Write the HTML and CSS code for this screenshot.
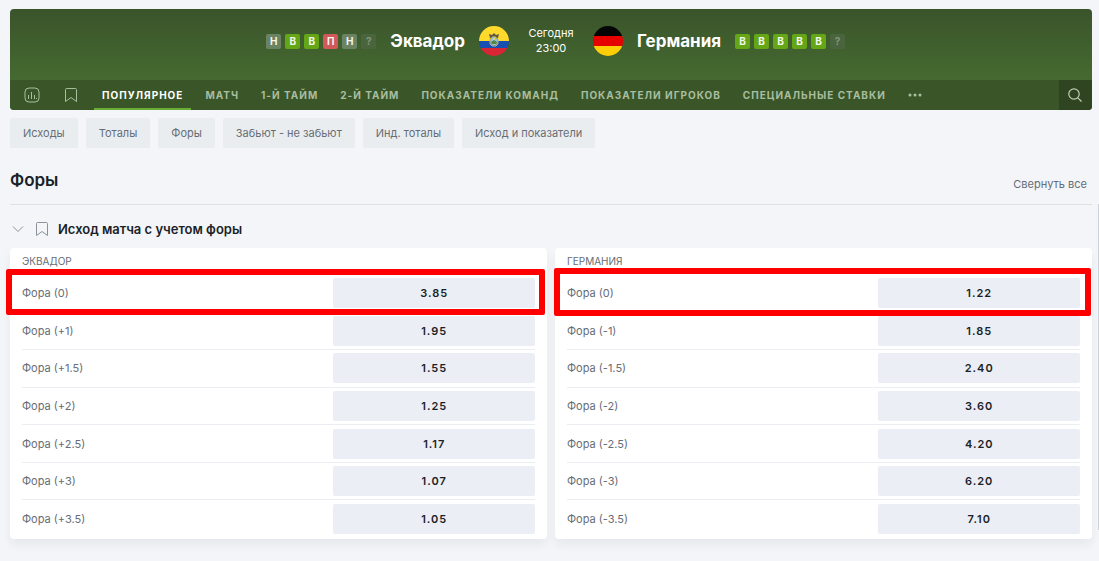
FILE: index.html
```html
<!DOCTYPE html>
<html lang="ru">
<head>
<meta charset="utf-8">
<meta name="viewport" content="width=device-width, initial-scale=1">
<title>Эквадор — Германия</title>
<link rel="stylesheet" href="styles.css">
</head>
<body>
<header class="match">
  <div class="scoreboard">
    <div class="team team-home">
      <div class="form">
        <span class="chip draw">Н</span><span class="chip win">В</span><span class="chip win">В</span><span class="chip loss">П</span><span class="chip draw">Н</span><span class="chip unknown">?</span>
      </div>
      <h1 class="team-name">Эквадор</h1>
      <svg class="flag" viewBox="0 0 30 30" aria-hidden="true">
        <clipPath id="round"><circle cx="15" cy="15" r="15"/></clipPath>
        <g clip-path="url(#round)">
          <path fill="#ffda2c" d="M0 0h30v15H0z"/>
          <path fill="#1750b0" d="M0 15h30v7H0z"/>
          <path fill="#d92637" d="M0 22h30v8H0z"/>
        </g>
        <path fill="#5d5744" d="M10 8l3 1 2-2 2 2 3-1-1 4-2 1h-4l-2-1z"/>
        <ellipse cx="15" cy="15" rx="4" ry="5" fill="#b99a3c"/>
        <ellipse cx="15" cy="15" rx="3" ry="4" fill="#8fc6e8"/>
        <path fill="#4d8a4a" d="M12 16l3-2 3 2-1 2h-4z"/>
        <circle cx="15" cy="13" r="1" fill="#ffda2c"/>
        <path fill="none" stroke="#a8b4bd" d="M11 13v5l2 2M19 13v5l-2 2M13 20h4"/>
      </svg>
    </div>
    <div class="kickoff"><span>Сегодня</span><time>23:00</time></div>
    <div class="team">
      <svg class="flag" viewBox="0 0 30 30" aria-hidden="true">
        <g clip-path="url(#round)">
          <path fill="#050505" d="M0 0h30v10H0z"/>
          <path fill="#e60000" d="M0 10h30v10H0z"/>
          <path fill="#ffce05" d="M0 20h30v10H0z"/>
        </g>
      </svg>
      <h1 class="team-name">Германия</h1>
      <div class="form">
        <span class="chip win">В</span><span class="chip win">В</span><span class="chip win">В</span><span class="chip win">В</span><span class="chip win">В</span><span class="chip unknown">?</span>
      </div>
    </div>
  </div>
  <nav class="tabs">
    <button class="tab-icon" aria-label="Статистика">
      <svg width="16" height="16" viewBox="0 0 16 16" fill="none" stroke="currentColor"><rect x="1" y="1" width="14" height="14" rx="4"/><path d="M4.500 8v4M7.500 5v7M10.500 8v4M12.500 11v1"/></svg>
    </button>
    <button class="tab-icon" aria-label="Избранное">
      <svg width="14" height="16" viewBox="0 0 14 16" fill="none" stroke="currentColor"><path d="M1.500 2.500q0-1 1-1h9q1 0 1 1v12L7 10.500l-5.500 4z"/></svg>
    </button>
    <a class="tab active" href="#popular">Популярное</a>
    <a class="tab" href="#match">Матч</a>
    <a class="tab" href="#half1">1-й тайм</a>
    <a class="tab" href="#half2">2-й тайм</a>
    <a class="tab" href="#teams">Показатели команд</a>
    <a class="tab" href="#players">Показатели игроков</a>
    <a class="tab" href="#special">Специальные ставки</a>
    <button class="more" aria-label="Ещё">
      <svg width="14" height="4" viewBox="0 0 14 4" fill="currentColor"><circle cx="2" cy="2" r="1.500"/><circle cx="7" cy="2" r="1.500"/><circle cx="12" cy="2" r="1.500"/></svg>
    </button>
    <button class="search" aria-label="Поиск">
      <svg width="16" height="16" viewBox="0 0 16 16" fill="none" stroke="currentColor" stroke-width="1.200"><circle cx="7" cy="7" r="5.200"/><path d="M10.800 10.800l3.700 3.700"/></svg>
    </button>
  </nav>
</header>

<main>
  <div class="filters">
    <button class="filter">Исходы</button>
    <button class="filter">Тоталы</button>
    <button class="filter">Форы</button>
    <button class="filter">Забьют - не забьют</button>
    <button class="filter">Инд. тоталы</button>
    <button class="filter">Исход и показатели</button>
  </div>

  <div class="section-head">
    <h2 class="section-title">Форы</h2>
    <button class="collapse">Свернуть все</button>
  </div>

  <div class="market-head">
    <button class="market-icon" aria-label="Свернуть">
      <svg width="16" height="16" viewBox="0 0 16 16" fill="none" stroke="currentColor"><path d="M3 5.500l5 5 5-5"/></svg>
    </button>
    <button class="market-icon" aria-label="В избранное">
      <svg width="14" height="16" viewBox="0 0 14 16" fill="none" stroke="currentColor"><path d="M1.500 2.500q0-1 1-1h9q1 0 1 1v12L7 10.500l-5.500 4z"/></svg>
    </button>
    <h3 class="market-title">Исход матча с учетом форы</h3>
  </div>

  <div class="panels">
    <section class="panel">
      <h4 class="panel-title">Эквадор</h4>
      <ul class="odds">
        <li class="row marked"><span>Фора (0)</span><button class="odd">3.85</button></li>
        <li class="row"><span>Фора (+1)</span><button class="odd">1.95</button></li>
        <li class="row"><span>Фора (+1.5)</span><button class="odd">1.55</button></li>
        <li class="row"><span>Фора (+2)</span><button class="odd">1.25</button></li>
        <li class="row"><span>Фора (+2.5)</span><button class="odd">1.17</button></li>
        <li class="row"><span>Фора (+3)</span><button class="odd">1.07</button></li>
        <li class="row"><span>Фора (+3.5)</span><button class="odd">1.05</button></li>
      </ul>
    </section>
    <section class="panel">
      <h4 class="panel-title">Германия</h4>
      <ul class="odds">
        <li class="row marked marked-away"><span>Фора (0)</span><button class="odd">1.22</button></li>
        <li class="row"><span>Фора (-1)</span><button class="odd">1.85</button></li>
        <li class="row"><span>Фора (-1.5)</span><button class="odd">2.40</button></li>
        <li class="row"><span>Фора (-2)</span><button class="odd">3.60</button></li>
        <li class="row"><span>Фора (-2.5)</span><button class="odd">4.20</button></li>
        <li class="row"><span>Фора (-3)</span><button class="odd">6.20</button></li>
        <li class="row"><span>Фора (-3.5)</span><button class="odd">7.10</button></li>
      </ul>
    </section>
  </div>
</main>
<div class="scroll-thumb"></div>
</body>
</html>
```

FILE: styles.css
```css
* { box-sizing: border-box; }

body {
  margin: 0;
  padding: 9px 7px 22px 10px;
  background: #f3f5f8;
  color: #1b1f27;
  font-family: Inter, "Noto Sans", sans-serif;
  font-size: 11px;
  line-height: 16px;
}

h1, h2, h3, h4, ul { margin: 0; padding: 0; }
ul { list-style: none; }

button {
  margin: 0;
  padding: 0;
  border: 0;
  background: none;
  color: inherit;
  font: inherit;
  cursor: pointer;
}

svg { display: block; }

/* Match header */
.match {
  overflow: hidden;
  border-radius: 4px;
  background: linear-gradient(#3a542b, #456a30 71px);
}

.scoreboard {
  display: grid;
  grid-template-columns: 1fr 84px 1fr;
  align-items: center;
  padding: 17px 0 24px;
}

.team { display: flex; align-items: center; gap: 14px; }
.team-home { justify-content: flex-end; }
.team-name { color: #fff; font-size: 17px; line-height: 24px; font-weight: 700; }
.flag { width: 30px; height: 30px; }

.form { display: flex; gap: 4px; }
.chip {
  width: 15px;
  height: 15px;
  border-radius: 2px;
  color: #f2f6ee;
  font-size: 10px;
  line-height: 15px;
  font-weight: 700;
  text-align: center;
}
.win { background: #65a616; }
.draw { background: #6b8362; }
.loss { background: #d1595c; }
.unknown { background: #4a653d; color: #82967a; }

.kickoff {
  display: flex;
  flex-direction: column;
  align-items: center;
  color: #fff;
  line-height: 15px;
}

.tabs {
  display: flex;
  align-items: stretch;
  height: 30px;
  background: #3a5628;
  color: #a9bd9f;
}
.tab-icon {
  display: flex;
  align-items: center;
  justify-content: center;
  width: 34px;
  margin-right: 6px;
}
.tab-icon:first-child { width: 44px; margin-right: 0; }
.tab {
  margin-right: 6px;
  padding: 0 8px;
  border-bottom: 2px solid transparent;
  color: inherit;
  font-size: 10px;
  line-height: 30px;
  font-weight: 700;
  letter-spacing: 1px;
  text-decoration: none;
  text-transform: uppercase;
  white-space: nowrap;
}
.active { border-color: #69ad36; color: #fff; }
.more { display: flex; align-items: center; padding: 0 8px; }
.search {
  display: flex;
  align-items: center;
  justify-content: center;
  width: 33px;
  margin-left: auto;
  padding-right: 2px;
  background: #2f4522;
  color: #c0cfb8;
}

/* Filters */
.filters { display: flex; flex-wrap: wrap; gap: 8px; padding-top: 8px; }
.filter {
  height: 30px;
  padding: 0 13px 1px;
  border-radius: 2px;
  background: #eaedef;
  color: #666d76;
}

.section-head {
  display: flex;
  align-items: flex-end;
  justify-content: space-between;
  padding: 20px 5px 12px 0;
  border-bottom: 1px solid #dde0e5;
}
.section-title { font-size: 17px; line-height: 24px; font-weight: 600; }
.collapse { color: #666d76; }

.market-head { display: flex; align-items: center; gap: 9px; height: 43px; padding: 4px 0 0; }
.market-icon { color: #8c929b; }
.market-title { font-size: 13px; line-height: 20px; font-weight: 600; }

/* Odds */
.panels { display: grid; grid-template-columns: 1fr 1fr; gap: 8px; }
.panel {
  padding: 0 12px 1px;
  border-radius: 4px;
  background: #fff;
  box-shadow: 0 6px 10px rgba(30, 40, 60, 0.06);
}
.panel-title {
  padding: 2px 0 3px;
  color: #666d76;
  font-size: 10px;
  line-height: 22px;
  font-weight: 400;
  text-transform: uppercase;
}
.odds { display: grid; grid-auto-rows: 1fr; min-height: 263px; }
.row {
  position: relative;
  display: grid;
  grid-template-columns: 17fr 11fr;
  align-items: center;
  border-bottom: 1px solid #eaedf1;
  color: #666d76;
}
.row:last-child { border-bottom-color: transparent; }
.odd {
  height: 30px;
  border-radius: 2px;
  background: #ebeef4;
  color: #1b1f27;
  font-weight: 600;
  letter-spacing: 1px;
}

.marked::after {
  content: "";
  position: absolute;
  inset: -6px -10px -3px -16px;
  border: 6px solid #fe0000;
  border-radius: 2px;
  pointer-events: none;
}
.marked-away::after { inset: -7px -11px -4px -13px; }

.scroll-thumb {
  position: fixed;
  top: 204px;
  right: 0;
  bottom: 31px;
  width: 1px;
  background: #cfd3d9;
}
```
